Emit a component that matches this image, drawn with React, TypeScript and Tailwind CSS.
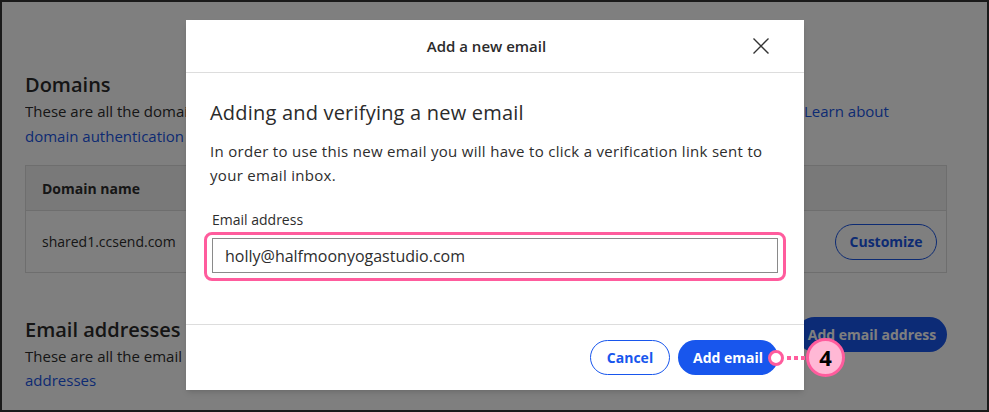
import React from "react";

const font = { fontFamily: "'Open Sans', 'Noto Sans', sans-serif" };

export default function App() {
  return (
    <div
      className="relative w-[989px] h-[412px] overflow-hidden border-2 border-[#1a1a1a] bg-white text-[#2d2d2d]"
      style={font}
    >
      {/* Background page */}
      <div className="flex flex-col px-[23px] pt-[69px]">
        <h2 className="text-[20px] leading-[28px] font-semibold text-[#2b2b2b]">Domains</h2>
        <div className="flex text-[15px] leading-[25px]">
          <span className="w-[779px] truncate">These are all the domains connected to your account. </span>
          <a className="text-[#1a56e6]">Learn about</a>
        </div>
        <a className="text-[15px] leading-[25px] text-[#1a56e6]">domain authentication</a>
        <div className="mt-[16px] w-[922px] border border-[#dcdcdc]">
          <div className="flex h-[45px] items-center border-b border-[#dcdcdc] bg-[#f3f3f3] px-4 text-[14px] font-bold">
            Domain name
          </div>
          <div className="flex h-[61px] items-center justify-between pl-4 pr-[9px] text-[14px]">
            <span>shared1.ccsend.com</span>
            <button className="h-[36px] w-[102px] rounded-full border border-[#1a56e6] text-[14px] font-bold text-[#1a56e6]">
              Customize
            </button>
          </div>
        </div>
        <div className="mt-[43px] flex w-[922px] items-start justify-between">
          <div className="flex flex-col">
            <h2 className="text-[20px] leading-[28px] font-semibold text-[#2b2b2b]">Email addresses</h2>
            <span className="text-[15px] leading-[24px]">These are all the email addresses you can send from.</span>
            <a className="text-[15px] leading-[24px] text-[#1a56e6]">addresses</a>
          </div>
          <button className="mt-[1px] h-[35px] w-[150px] rounded-full bg-[#1856ed] text-[14px] font-bold text-white">
            Add email address
          </button>
        </div>
      </div>

      {/* Overlay */}
      <div className="absolute inset-0 bg-black/50" />

      {/* Modal */}
      <div className="absolute left-[184px] top-[18px] flex h-[370px] w-[618px] flex-col bg-white shadow-md">
        <div className="flex h-[53px] items-center border-b border-[#dddddd] pl-[35px] pr-[34px]">
          <div className="flex-1 text-center text-[15px] font-semibold text-[#2b2b2b]">Add a new email</div>
          <svg width="18" height="18" viewBox="0 0 18 18" className="text-[#333]">
            <path d="M1.5 1.5 L16.5 16.5 M16.5 1.5 L1.5 16.5" stroke="currentColor" strokeWidth="1.4" fill="none" />
          </svg>
        </div>
        <div className="flex flex-1 flex-col px-[24px] pt-[26px]">
          <h3 className="text-[20px] leading-[28px] font-medium tracking-[0.2px] text-[#2b2b2b]">
            Adding and verifying a new email
          </h3>
          <p className="mt-[12px] text-[15px] leading-[24px] tracking-[0.3px] text-[#2d2d2d]">
            In order to use this new email you will have to click a verification link sent to your email inbox.
          </p>
          <label className="mt-[23px] ml-[2px] text-[14px] leading-[20px] text-[#2d2d2d]">Email address</label>
          <div className="relative mt-[8px] ml-[2px] mr-[2px]">
            <div className="flex h-[35px] items-center border border-[#8a8a8a] pl-[12px] text-[16px] text-[#2d2d2d]">
              holly@halfmoonyogastudio.com
            </div>
            <div className="absolute -inset-x-[8px] -top-[6px] -bottom-[8px] rounded-[8px] border-[3px] border-[#ff5c9d]" />
          </div>
        </div>
        <div className="flex h-[66px] items-center justify-end gap-[8px] border-t border-[#dddddd] pr-[26px]">
          <button className="h-[35px] w-[80px] rounded-full border border-[#1856ed] text-[14px] font-bold text-[#1856ed]">
            Cancel
          </button>
          <button className="h-[35px] w-[100px] rounded-full bg-[#1856ed] text-[14px] font-bold text-white">
            Add email
          </button>
        </div>
      </div>

      {/* Callout */}
      <div className="absolute left-[766px] top-[336px] flex items-center">
        <div className="h-[16px] w-[16px] rounded-full border-[3px] border-[#ff5c9d] bg-white" />
        <div className="ml-[3px] flex gap-[3px]">
          <div className="h-[4px] w-[4px] bg-[#ff5c9d]" />
          <div className="h-[4px] w-[4px] bg-[#ff5c9d]" />
          <div className="h-[4px] w-[4px] bg-[#ff5c9d]" />
        </div>
        <div className="ml-[1px] flex h-[39px] w-[39px] items-center justify-center rounded-full border-[3px] border-[#ff5c9d] bg-[#ffb8d5] text-[22px] font-bold text-black">
          4
        </div>
      </div>
    </div>
  );
}
